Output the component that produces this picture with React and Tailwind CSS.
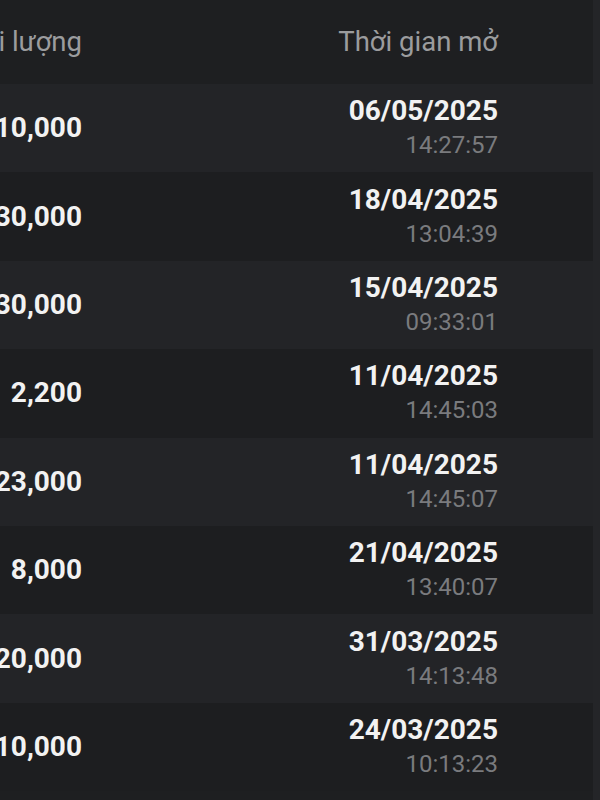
import React from 'react';

const rows = [
  { vol: '10,000', date: '06/05/2025', time: '14:27:57' },
  { vol: '30,000', date: '18/04/2025', time: '13:04:39' },
  { vol: '30,000', date: '15/04/2025', time: '09:33:01' },
  { vol: '2,200', date: '11/04/2025', time: '14:45:03' },
  { vol: '23,000', date: '11/04/2025', time: '14:45:07' },
  { vol: '8,000', date: '21/04/2025', time: '13:40:07' },
  { vol: '20,000', date: '31/03/2025', time: '14:13:48' },
  { vol: '10,000', date: '24/03/2025', time: '10:13:23' },
];

function Row({ row, odd }) {
  return (
    <div className={`flex h-[88.4px] items-center pr-[95px] ${odd ? 'bg-[#232427]' : 'bg-[#1d1e20]'}`}>
      <div className="flex w-[82px] justify-end overflow-hidden whitespace-nowrap text-[28px] font-bold text-[#f2f2f2]">
        {row.vol}
      </div>
      <div className="flex-1" />
      <div className="flex flex-col items-end">
        <span className="text-[28px] font-bold leading-[34px] text-[#f2f2f2]">{row.date}</span>
        <span className="text-[24px] leading-[34px] text-[#7a7b7e]">{row.time}</span>
      </div>
    </div>
  );
}

export default function App() {
  return (
    <div className="flex h-[800px] w-[600px] overflow-hidden bg-[#1e1f21] font-['Roboto',sans-serif]">
      <div className="flex-1">
        <div className="flex h-[84px] items-center pr-[95px] text-[27.5px] text-[#9b9c9e]">
          <div className="flex w-[82px] justify-end overflow-hidden whitespace-nowrap">Khối lượng</div>
          <div className="flex-1" />
          <div>Thời gian mở</div>
        </div>
        {rows.map((r, i) => (
          <Row key={i} row={r} odd={i % 2 === 0} />
        ))}
      </div>
      <div className="w-[7px] bg-[#242528]" />
    </div>
  );
}
